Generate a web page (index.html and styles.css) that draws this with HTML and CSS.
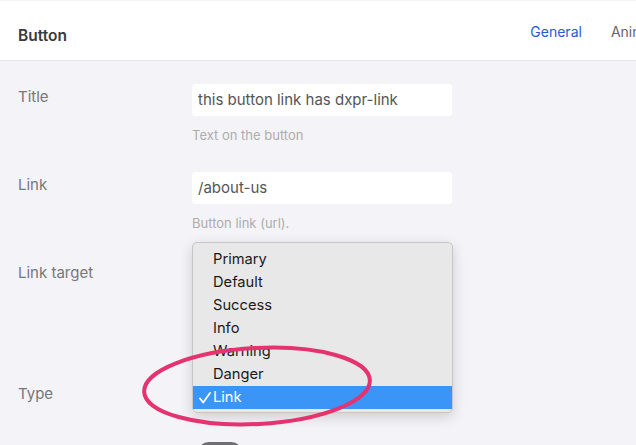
FILE: index.html
```html
<!DOCTYPE html>
<html>
<head>
<meta charset="utf-8">
<link rel="stylesheet" href="styles.css">
</head>
<body>
<div class="page">
  <header class="header">
    <div class="title">Button</div>
    <nav class="tabs">
      <span class="tab active">General</span>
      <span class="tab">Animation</span>
    </nav>
  </header>
  <main class="form">
    <div class="row">
      <label class="label">Title</label>
      <div class="field">
        <div class="input">this button link has dxpr-link</div>
        <div class="help">Text on the button</div>
      </div>
    </div>
    <div class="row">
      <label class="label">Link</label>
      <div class="field">
        <div class="input">/about-us</div>
        <div class="help">Button link (url).</div>
      </div>
    </div>
    <div class="row row-target">
      <label class="label">Link target</label>
      <div class="field">
        <div class="input select"></div>
      </div>
    </div>
    <div class="row">
      <label class="label">Type</label>
      <div class="field">
        <div class="input select"></div>
      </div>
    </div>
    <div class="row">
      <label class="label"></label>
      <div class="field">
        <div class="toggle"></div>
      </div>
    </div>
  </main>

  <ul class="menu">
    <li class="item">Primary</li>
    <li class="item">Default</li>
    <li class="item">Success</li>
    <li class="item">Info</li>
    <li class="item">Warning</li>
    <li class="item">Danger</li>
    <li class="item selected"><svg class="check" width="12" height="12" viewBox="0 0 12 12"><path d="M1 6.5 L4.2 10.5 L11 1" fill="none" stroke="#fff" stroke-width="1.8" stroke-linecap="round" stroke-linejoin="round"/></svg>Link</li>
  </ul>

  <svg class="circle" width="636" height="445" viewBox="0 0 636 445">
    <ellipse cx="257" cy="386" rx="113" ry="38" fill="none" stroke="#e5336f" stroke-width="4" transform="rotate(-3 257 386)"/>
  </svg>
</div>
</body>
</html>
```

FILE: styles.css
```css
* { box-sizing: border-box; }
html, body {
  margin: 0;
  padding: 0;
  background: #f3f3f8;
  font-family: Inter, "Noto Sans", "Liberation Sans", sans-serif;
  overflow: hidden;
}
.page {
  position: relative;
  width: 636px;
  height: 445px;
  overflow: hidden;
}
.header {
  margin-top: 1px;
  height: 60px;
  background: #fff;
  border-bottom: 1px solid #e4e4ea;
  display: flex;
  align-items: center;
  justify-content: space-between;
  padding: 0 0 0 18px;
  white-space: nowrap;
}
.title {
  font-size: 15.5px;
  font-weight: 600;
  color: #3a3a3a;
  padding-top: 9px;
}
.tabs {
  display: flex;
  gap: 29px;
  padding-top: 1px;
  margin-right: -41px;
}
.tab {
  font-size: 14px;
  color: #666;
}
.tab.active { color: #2a58d6; }
.form {
  padding-top: 23px;
  display: flex;
  flex-direction: column;
  gap: 29px;
}
.row {
  display: grid;
  grid-template-columns: 192px 260px;
  align-items: start;
}
.label {
  padding-left: 18px;
  padding-top: 3px;
  font-size: 15px;
  line-height: 20px;
  color: #777;
}
.input {
  height: 32px;
  background: #fff;
  border-radius: 4px;
  padding: 0 6px;
  font-size: 15px;
  line-height: 32px;
  color: #555;
}
.help {
  margin-top: 11px;
  font-size: 13px;
  line-height: 16px;
  color: #adadad;
}
.row-target { margin-bottom: 60px; }
.toggle {
  margin-left: 5px;
  width: 46px;
  height: 24px;
  border-radius: 12px;
  background: #6f6f72;
}
.menu {
  position: absolute;
  left: 192px;
  top: 242px;
  width: 261px;
  margin: 0;
  padding: 5px 0 3px;
  list-style: none;
  background: #e8e8e8;
  border: 1px solid #c6c6c6;
  border-radius: 5px;
  box-shadow: 0 4px 14px rgba(0, 0, 0, 0.16);
  font-family: Inter, "Noto Sans", sans-serif;
}
.item {
  position: relative;
  height: 23px;
  line-height: 23px;
  padding-left: 20px;
  font-size: 14.7px;
  color: #1b1b1b;
}
.item.selected {
  background: #3a95f6;
  color: #fff;
}
.check {
  position: absolute;
  left: 6px;
  top: 6px;
}
.circle {
  position: absolute;
  left: 0;
  top: 0;
  pointer-events: none;
}
```
